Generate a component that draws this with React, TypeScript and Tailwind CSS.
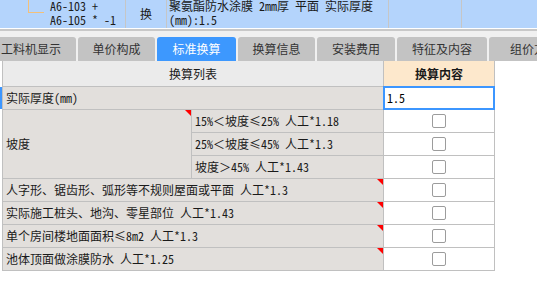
import React from 'react';

const FONT = '"Noto Sans Mono CJK SC", "Noto Sans CJK SC", sans-serif';

const TABS = [
  { label: '工料机显示', w: 'w-[90px]' },
  { label: '单价构成', w: 'w-[77px]' },
  { label: '标准换算', w: 'w-[79px]', active: true },
  { label: '换算信息', w: 'w-[77px]' },
  { label: '安装费用', w: 'w-[78px]' },
  { label: '特征及内容', w: 'w-[90px]' },
  { label: '组价方案', w: 'w-[90px]' },
];

const CELL = 'relative bg-[#e2dfdc] flex items-center pl-[3px] whitespace-nowrap overflow-hidden text-[#1a1a1a]';

function Flag() {
  return <span className="absolute top-0 right-0 w-0 h-0 border-t-[6px] border-l-[6px] border-t-[#ff0000] border-l-transparent" />;
}

function Check() {
  return (
    <div className="bg-white flex items-center justify-center">
      <div className="w-[14px] h-[14px] border border-[#9c9c9c] rounded-[2px] bg-white" />
    </div>
  );
}

export default function App() {
  return (
    <div className="w-[537px] h-[300px] bg-white overflow-hidden text-[12px]" style={{ fontFamily: FONT }}>
      {/* Selected row of the upper grid */}
      <div className="h-[28px] bg-[#b4d4fc] flex overflow-hidden text-[#1a1a1a]">
        <div className="relative w-[126px] border-r border-[#c6c6c6] pl-[50px]">
          <div className="absolute left-[28px] top-0 w-[16px] h-[13px] border-l border-b border-[#f3c07a]" />
          <div className="h-[14px] leading-[14px] -mt-[1px]">A6-103 +</div>
          <div className="h-[14px] leading-[14px]">A6-105 * -1</div>
        </div>
        <div className="w-[41px] border-r border-[#c6c6c6] flex items-center justify-center">换</div>
        <div className="w-[222px] border-r border-[#c6c6c6] pl-[2px] whitespace-nowrap overflow-hidden">
          <div className="h-[14px] leading-[14px] -mt-[1px]">聚氨酯防水涂膜 2mm厚 平面  实际厚度</div>
          <div className="h-[14px] leading-[14px]">(mm):1.5</div>
        </div>
        <div className="w-[73px] border-r border-[#c6c6c6]" />
        <div className="flex-1" />
      </div>
      <div className="h-px bg-white" />
      <div className="h-[2px] bg-[#c8c8c8]" />

      {/* Tabs */}
      <div className="h-[30px] bg-[#f0f0f0] pt-[6px] overflow-hidden">
        <div className="flex gap-[2px] -ml-[14px]">
          {TABS.map((t) => (
            <div
              key={t.label}
              className={`${t.w} shrink-0 h-[24px] rounded-t-[3px] flex items-center justify-center whitespace-nowrap ${
                t.active ? 'bg-[#3d98fe] text-white' : 'bg-[#c3c3c3] text-[#333]'
              }`}
            >
              {t.label}
            </div>
          ))}
        </div>
      </div>

      {/* Conversion table */}
      <div className="relative pl-[2px]">
        <div className="absolute left-0 top-[26px] w-[2px] h-[22px] bg-[#3c96ff]" />
        <div className="grid grid-cols-[188px_191px_110px] grid-rows-[25px_repeat(8,22px)] gap-px bg-[#c0c0c0] border-l border-r border-b border-[#c0c0c0] w-fit">
          <div className="col-span-2 bg-[#ebebeb] flex items-center justify-center text-[#1a1a1a]">换算列表</div>
          <div className="bg-[#fde8cc] flex items-center justify-center font-bold text-[#1a1a1a]">换算内容</div>

          <div className={`${CELL} col-span-2`}>实际厚度(mm)</div>
          <div className="relative bg-white flex items-center pl-[3px]">
            <div className="absolute -inset-px border-2 border-[#3c96ff]" />
            1.5
          </div>

          <div className={`${CELL} row-span-3`}>
            坡度
            <Flag />
          </div>
          <div className={CELL}>15%＜坡度≤25% 人工*1.18</div>
          <Check />
          <div className={CELL}>25%＜坡度≤45% 人工*1.3</div>
          <Check />
          <div className={CELL}>坡度＞45% 人工*1.43</div>
          <Check />

          <div className={`${CELL} col-span-2`}>
            人字形、锯齿形、弧形等不规则屋面或平面 人工*1.3
            <Flag />
          </div>
          <Check />
          <div className={`${CELL} col-span-2`}>
            实际施工桩头、地沟、零星部位 人工*1.43
            <Flag />
          </div>
          <Check />
          <div className={`${CELL} col-span-2`}>
            单个房间楼地面面积≤8m2 人工*1.3
            <Flag />
          </div>
          <Check />
          <div className={`${CELL} col-span-2`}>
            池体顶面做涂膜防水 人工*1.25
            <Flag />
          </div>
          <Check />
        </div>
      </div>
    </div>
  );
}
